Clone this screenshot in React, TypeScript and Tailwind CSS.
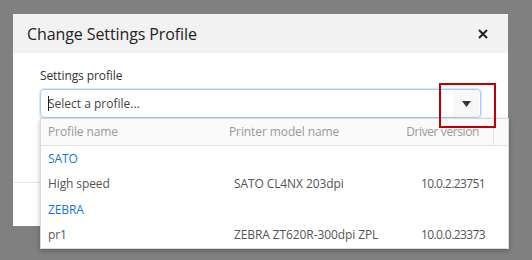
import React from "react";

const rows: { type: "group" | "item"; name: string; model?: string; version?: string }[] = [
  { type: "group", name: "SATO" },
  { type: "item", name: "High speed", model: "SATO CL4NX 203dpi", version: "10.0.2.23751" },
  { type: "group", name: "ZEBRA" },
  { type: "item", name: "pr1", model: "ZEBRA ZT620R-300dpi ZPL", version: "10.0.0.23373" },
];

export default function App() {
  return (
    <div
      className="relative w-[532px] h-[260px] overflow-hidden bg-[#808080] pl-[13px] pt-[14px]"
      style={{ fontFamily: '"Open Sans", "Noto Sans", sans-serif' }}
    >
      <div className="relative w-[495px] h-[212px] bg-white flex flex-col">
        <div className="h-[39px] bg-[#f2f2f2] flex items-center justify-between pl-[14px] pr-[20px]">
          <span className="text-[16px] text-[#222] tracking-[-0.1px]">Change Settings Profile</span>
          <svg width="10" height="10" viewBox="0 0 10 10" className="mt-[1px]">
            <path d="M1 1 L9 9 M9 1 L1 9" stroke="#222" strokeWidth="2" />
          </svg>
        </div>
        <div className="h-[129px] px-[27px] pt-[14px]">
          <div className="text-[12px] text-[#333] leading-[17px] tracking-[-0.1px]">Settings profile</div>
          <div className="mt-[5px] w-[441px] h-[29px] rounded-[4px] border border-[#a9cdf5] shadow-[0_0_0_1px_#d6e8fb] flex items-center">
            <div className="flex-1 flex items-center pl-[7px] text-[12px] text-[#444]">
              <span className="w-px h-[15px] bg-[#222] mr-[-1px]" />
              <span>Select a profile...</span>
            </div>
            <div className="w-[26px] h-[27px] bg-[#f8f8f8] flex items-center justify-center mr-[1px]">
              <svg width="9" height="6" viewBox="0 0 9 6">
                <path d="M0 0 L9 0 L4.5 6 Z" fill="#333" />
              </svg>
            </div>
          </div>
        </div>
        <div className="border-t border-[#e5e5e5] flex-1" />

        {/* dropdown overlay */}
        <div className="absolute left-[27px] top-[104px] w-[469px] bg-white border border-[#d9d9d9] shadow-[0_2px_5px_rgba(0,0,0,0.25)] text-[12px] whitespace-nowrap tracking-[-0.1px]">
          <div className="h-[27px] bg-[#fafafa] border-b border-[#e2e2e2] flex items-center text-[#999]">
            <div className="w-[188px] pl-[7px]">Profile name</div>
            <div className="w-[164px]">Printer model name</div>
            <div className="w-[86px] text-right tracking-[-0.4px]">Driver version</div>
            <div className="ml-auto w-[15px] h-full border-l border-[#e2e2e2]" />
          </div>
          {rows.map((r, i) =>
            r.type === "group" ? (
              <div key={i} className="h-[25px] flex items-center pl-[7px] text-[#1a73e8]">
                {r.name}
              </div>
            ) : (
              <div key={i} className="h-[26px] flex items-center text-[#555]">
                <div className="w-[193px] pl-[7px]">{r.name}</div>
                <div className="w-[158px]">{r.model}</div>
                <div className="w-[93px] text-right tracking-[-0.6px]">{r.version}</div>
              </div>
            )
          )}
        </div>
      </div>

      {/* red annotation box */}
      <div className="absolute left-[439px] top-[83px] w-[57px] h-[45px] border-2 border-[#c00000]" />
    </div>
  );
}
